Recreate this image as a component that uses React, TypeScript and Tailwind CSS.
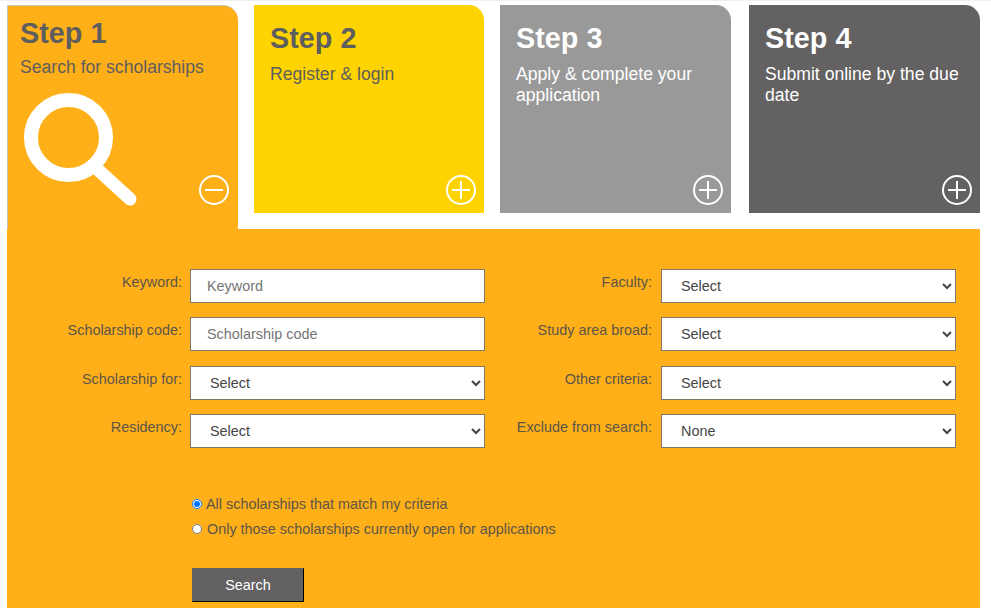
import React from "react";

const FONT = "font-['Liberation_Sans',Arial,sans-serif]";

function Toggle() {
  return (
    <svg width="32" height="32" viewBox="0 0 32 32" fill="none" stroke="#fff" strokeWidth="2" className="absolute right-[7px] bottom-[7px]">
      <circle cx="16" cy="16" r="14" />
      <path d="M7 16H25" />
      <path d="M16 7V25" />
    </svg>
  );
}

function Card({ step, text, bg, fg, w }: { step: string; text: string; bg: string; fg: string; w: string }) {
  return (
    <div className={`relative h-[208px] rounded-tr-[15px] ${w} ${bg} ${fg} pl-[16px] pt-[15px]`}>
      <div className="text-[28.8px] leading-[36px] font-bold">{step}</div>
      <div className="mt-[8px] text-[17.6px] leading-[21px] pr-[15px]">{text}</div>
      <Toggle />
    </div>
  );
}

function Label({ text }: { text: string }) {
  return <label className="block text-[14.4px] leading-[16px] text-[#5c5548] text-right whitespace-nowrap pt-[5px] w-full">{text}</label>;
}

function TextField({ ph }: { ph: string }) {
  return (
    <input
      placeholder={ph}
      className="w-[295px] h-[34px] bg-white border border-[#7d7868] pl-[16px] text-[14.4px] text-[#555] placeholder:text-[#757575] outline-none"
    />
  );
}

function SelectField({ value, pl }: { value: string; pl: string }) {
  return (
    <select defaultValue={value} className={`w-[295px] h-[34px] bg-white border border-[#7d7868] ${pl} text-[14.4px] text-[#444] outline-none`}>
      <option>{value}</option>
    </select>
  );
}

function Row({ label, gap, children, mt }: { label: string; gap: string; children: React.ReactNode; mt?: string }) {
  return (
    <div className={`flex ${mt ?? ""}`}>
      <div className={`w-[175px] ${gap} shrink-0`}>
        <Label text={label} />
      </div>
      {children}
    </div>
  );
}

export default function App() {
  return (
    <div className={`${FONT} w-[991px] h-[613px] overflow-hidden bg-white border-t border-[#eef0f4]`}>
      <div className="ml-[7px] w-[973px] pt-[4px]">
        <div className="flex items-start h-[224px]">
          <div className="relative w-[231px] h-[224px] bg-[#ffaf18] rounded-tr-[15px] border-t border-l border-[#c9c3b4] text-[#5e5e5e] pl-[12px] pt-[9px]">
            <div className="text-[28.8px] leading-[36px] font-bold">Step 1</div>
            <div className="mt-[6px] text-[17.6px] leading-[21px]">Search for scholarships</div>
            <svg width="116" height="116" viewBox="0 0 116 116" fill="none" stroke="#fff" className="absolute left-[16px] top-[87px]">
              <circle cx="44.5" cy="44.5" r="37.5" strokeWidth="14" />
              <path d="M71 74L106 106" strokeWidth="13" strokeLinecap="round" />
            </svg>
            <svg width="32" height="32" viewBox="0 0 32 32" fill="none" stroke="#fff" strokeWidth="2" className="absolute right-[8px] bottom-[23px]">
              <circle cx="16" cy="16" r="14" />
              <path d="M7 16H25" />
            </svg>
          </div>
          <div className="ml-[16px]">
            <Card step="Step 2" text="Register & login" bg="bg-[#ffd300]" fg="text-[#5e5e5e]" w="w-[230px]" />
          </div>
          <div className="ml-[16px]">
            <Card step="Step 3" text="Apply & complete your application" bg="bg-[#999999]" fg="text-white" w="w-[231px]" />
          </div>
          <div className="ml-[18px]">
            <Card step="Step 4" text="Submit online by the due date" bg="bg-[#636161]" fg="text-white" w="w-[231px]" />
          </div>
        </div>
        <div className="h-[379px] bg-[#ffaf18] pt-[40px] overflow-hidden">
          <div className="flex">
            <div className="flex flex-col w-[478px]">
              <Row label="Keyword:" gap="mr-[8px]"><TextField ph="Keyword" /></Row>
              <Row label="Scholarship code:" gap="mr-[8px]" mt="mt-[14px]"><TextField ph="Scholarship code" /></Row>
              <Row label="Scholarship for:" gap="mr-[8px]" mt="mt-[15px]"><SelectField value="Select" pl="pl-[15px]" /></Row>
              <Row label="Residency:" gap="mr-[8px]" mt="mt-[14px]"><SelectField value="Select" pl="pl-[15px]" /></Row>
            </div>
            <div className="flex flex-col">
              <Row label="Faculty:" gap="mr-[9px] -ml-[8px]"><SelectField value="Select" pl="pl-[15px]" /></Row>
              <Row label="Study area broad:" gap="mr-[9px] -ml-[8px]" mt="mt-[14px]"><SelectField value="Select" pl="pl-[15px]" /></Row>
              <Row label="Other criteria:" gap="mr-[9px] -ml-[8px]" mt="mt-[15px]"><SelectField value="Select" pl="pl-[15px]" /></Row>
              <Row label="Exclude from search:" gap="mr-[9px] -ml-[8px]" mt="mt-[14px]"><SelectField value="None" pl="pl-[15px]" /></Row>
            </div>
          </div>
          <div className="ml-[185px] mt-[48px] text-[14.4px] leading-[16px] text-[#5c5548]">
            <label className="flex items-center h-[16px]">
              <input type="radio" name="scope" defaultChecked className="w-[10px] h-[10px] m-0 mr-[4px]" />
              All scholarships that match my criteria
            </label>
            <label className="flex items-center h-[16px] mt-[9px]">
              <input type="radio" name="scope" className="w-[10px] h-[10px] m-0 mr-[5px]" />
              Only those scholarships currently open for applications
            </label>
          </div>
          <button className="block ml-[185px] mt-[31px] w-[112px] h-[34px] pt-[1px] bg-[#636161] text-white text-[14.4px] border border-[#636161] border-r-black border-b-black">
            Search
          </button>
        </div>
      </div>
    </div>
  );
}
